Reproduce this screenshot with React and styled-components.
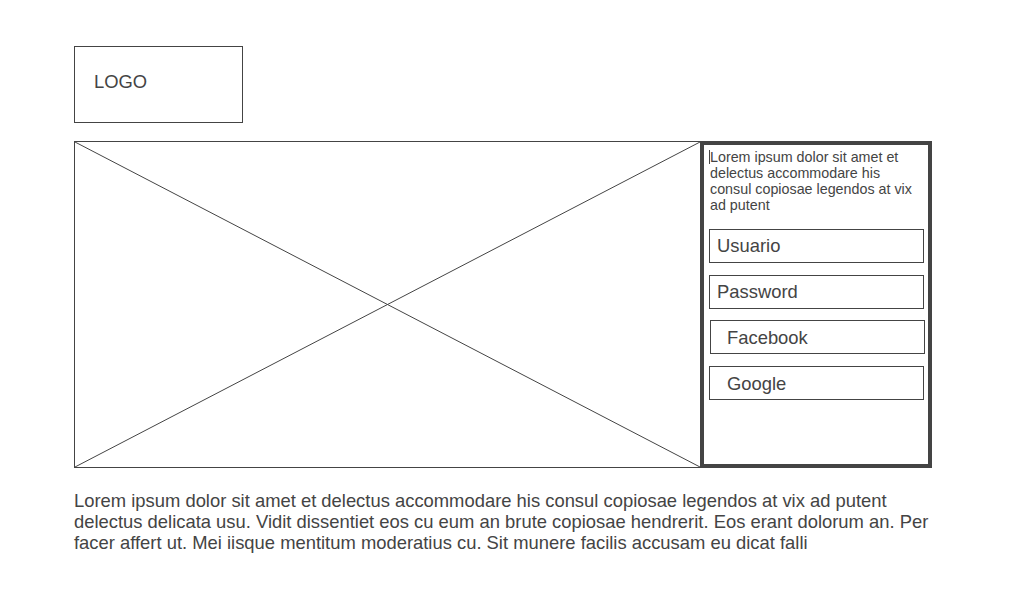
import React from "react";
import styled, { createGlobalStyle } from "styled-components";

const GlobalStyle = createGlobalStyle`
  html, body {
    margin: 0;
    padding: 0;
    background: #fff;
  }
  body {
    font-family: "Liberation Sans", Arial, sans-serif;
    color: #444;
  }
`;

// --- Layout ---
const Page = styled.div`
  padding: 46px 0 0 74px;
  width: 858px;
`;

const LogoBox = styled.div`
  box-sizing: border-box;
  width: 169px;
  height: 77px;
  border: 1px solid #444;
  padding: 24px 0 0 19px;
  font-size: 18.4px;
  line-height: 21px;
`;

const Hero = styled.div`
  display: flex;
  margin-top: 18px;
  height: 327px;
`;

const Placeholder = styled.div`
  box-sizing: border-box;
  width: 627px;
  height: 100%;
  border: 1px solid #444;
  margin-right: -1px;

  svg {
    display: block;
    width: 100%;
    height: 100%;
  }
`;

const Panel = styled.div`
  box-sizing: border-box;
  width: 232px;
  height: 100%;
  border: 4px solid #444;
  padding: 4px 4px 0 5px;
  display: flex;
  flex-direction: column;
`;

// text block with a caret before its first line
const Intro = styled.p`
  position: relative;
  margin: 0 0 16px 0;
  padding: 0 2px 0 1px;
  font-size: 14.3px;
  line-height: 16px;

  &::before {
    content: "";
    position: absolute;
    left: 0;
    top: 1px;
    width: 1px;
    height: 14px;
    background: #444;
  }
`;

const Fields = styled.div`
  display: flex;
  flex-direction: column;
  gap: 12px;
`;

const Field = styled.div`
  box-sizing: border-box;
  width: 215px;
  height: 34px;
  border: 1px solid #444;
  font-size: 18.4px;
  line-height: 32px;
  padding-left: 7px;
`;

const SocialButton = styled(Field)`
  padding-left: ${(p) => (p.$shift ? "16px" : "17px")};
  padding-top: 1px;
  margin-left: ${(p) => (p.$shift ? "1px" : "0")};
  margin-top: ${(p) => (p.$shift ? "-1px" : "0")};
`;

const Body = styled.p`
  margin: 22px 0 0 0;
  font-size: 18.4px;
  line-height: 21px;
`;

const App = () => (
  <>
    <GlobalStyle />
    <Page>
      <LogoBox>LOGO</LogoBox>
      <Hero>
        <Placeholder>
          <svg viewBox="0 0 100 100" preserveAspectRatio="none">
            <line x1="0" y1="0" x2="100" y2="100" stroke="#444" strokeWidth="1" vectorEffect="non-scaling-stroke" />
            <line x1="100" y1="0" x2="0" y2="100" stroke="#444" strokeWidth="1" vectorEffect="non-scaling-stroke" />
          </svg>
        </Placeholder>
        <Panel>
          <Intro>
            Lorem ipsum dolor sit amet et delectus accommodare his consul
            copiosae legendos at vix ad putent
          </Intro>
          <Fields>
            <Field>Usuario</Field>
            <Field>Password</Field>
            <SocialButton $shift>Facebook</SocialButton>
            <SocialButton>Google</SocialButton>
          </Fields>
        </Panel>
      </Hero>
      <Body>
        Lorem ipsum dolor sit amet et delectus accommodare his consul copiosae
        legendos at vix ad putent delectus delicata usu. Vidit dissentiet eos cu
        eum an brute copiosae hendrerit. Eos erant dolorum an. Per facer affert
        ut. Mei iisque mentitum moderatius cu. Sit munere facilis accusam eu
        dicat falli
      </Body>
    </Page>
  </>
);

export default App;
